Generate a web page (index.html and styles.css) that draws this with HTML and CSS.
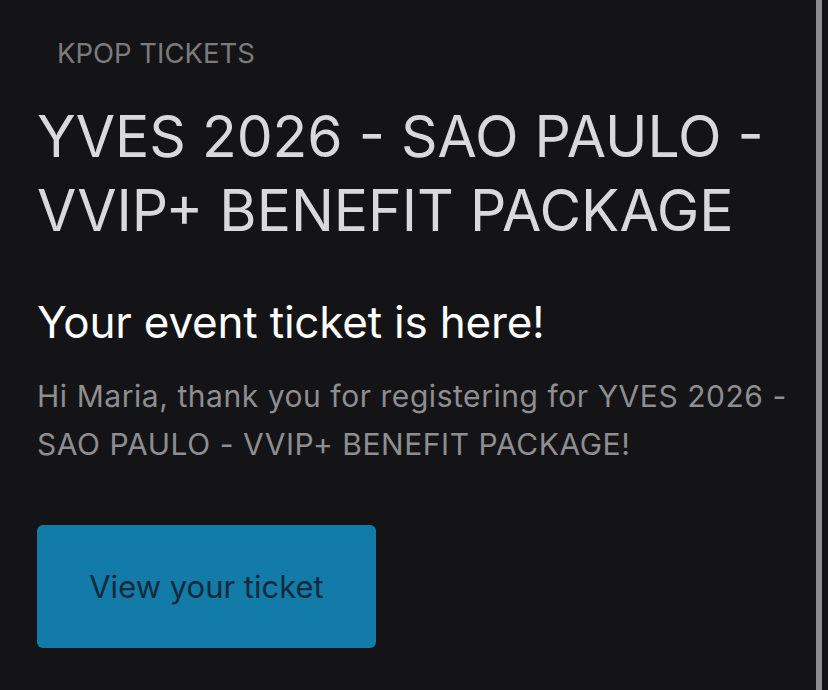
FILE: index.html
```html
<!DOCTYPE html>
<html lang="en">
<head>
    <meta charset="UTF-8">
    <meta name="viewport" content="width=device-width, initial-scale=1.0">
    <title>Your event ticket is here!</title>
    <link rel="stylesheet" href="styles.css">
</head>
<body>
    <div class="frame">
        <main class="email">
            <p class="kicker">KPOP TICKETS</p>
            <h1 class="event-title">YVES 2026 - SAO PAULO - VVIP+ BENEFIT PACKAGE</h1>
            <h2 class="headline">Your event ticket is here!</h2>
            <p class="intro">Hi Maria, thank you for registering for YVES 2026 - SAO PAULO - VVIP+ BENEFIT PACKAGE!</p>
            <a href="#" class="ticket-button">View your ticket</a>
        </main>
    </div>
</body>
</html>
```

FILE: styles.css
```css
html, body {
    margin: 0;
    padding: 0;
    background: #141416;
}

body {
    font-family: Inter, "Noto Sans", sans-serif;
    height: 690px;
    overflow: hidden;
}

.frame {
    width: 816px;
    height: 690px;
    border-right: 6px solid #8d8d8f;
}

.email {
    padding: 30px 20px 0 37px;
}

.kicker {
    margin: 0 0 0 20px;
    font-size: 27.5px;
    line-height: 46px;
    color: #7b7b7d;
}

.event-title {
    margin: 24px 0 0;
    font-size: 57px;
    font-weight: 400;
    line-height: 74px;
    color: #d9d9db;
}

.headline {
    margin: 46px 0 0;
    font-size: 44px;
    font-weight: 400;
    line-height: 56px;
    letter-spacing: -0.2px;
    color: #ffffff;
}

.intro {
    margin: 22px 0 0;
    font-size: 30px;
    line-height: 48px;
    letter-spacing: 0.55px;
    color: #8e8e90;
}

.ticket-button {
    display: flex;
    align-items: center;
    justify-content: center;
    width: 339px;
    height: 123px;
    margin-top: 57px;
    border-radius: 6px;
    background: #127ba7;
    color: #132a3b;
    font-size: 31px;
    text-decoration: none;
}
```
